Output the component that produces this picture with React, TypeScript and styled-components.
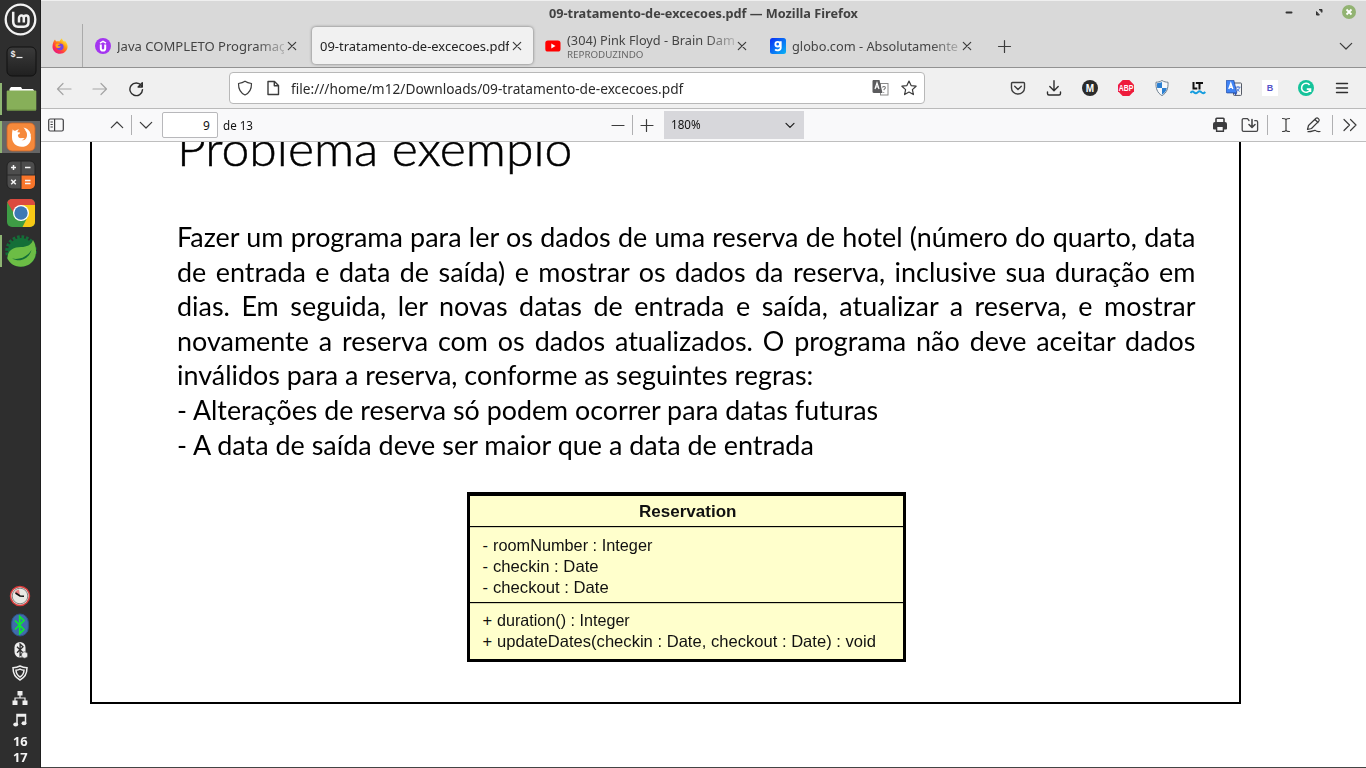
import React, { useLayoutEffect, useRef, useState } from 'react';
import styled, { createGlobalStyle, css } from 'styled-components';

const GlobalStyle = createGlobalStyle`
  * { box-sizing: border-box; }
  body { margin: 0; background: #fff; overflow: hidden; }
  svg { display: block; flex: none; }
`;

const uiFont = `"Noto Sans", "Open Sans", sans-serif`;

/* ---------- text fitted to a width ---------- */

const FitOuter = styled.span<{ $w: number }>`
  display: block;
  flex: none;
  width: ${(p) => p.$w}px;
  white-space: pre;
`;

const FitInner = styled.span`
  display: inline-block;
  transform-origin: 0 50%;
`;

function Fit({ w, children }: { w: number; children: React.ReactNode }) {
  const ref = useRef<HTMLSpanElement>(null);
  const [scale, setScale] = useState(1);
  useLayoutEffect(() => {
    if (ref.current) setScale(w / ref.current.offsetWidth);
  }, [w]);
  return (
    <FitOuter $w={w}>
      <FitInner ref={ref} style={{ transform: `scaleX(${scale})` }}>
        {children}
      </FitInner>
    </FitOuter>
  );
}

/* ---------- shell ---------- */

const Screen = styled.div`
  display: flex;
  width: 1366px;
  height: 768px;
  overflow: hidden;
  font-family: ${uiFont};
`;

const Dock = styled.aside`
  flex: none;
  display: flex;
  flex-direction: column;
  width: 41px;
  background: #2e2e2e;
  border-right: 1px solid #1f1f1f;
`;

const MintButton = styled.div`
  display: flex;
  justify-content: center;
  height: 42px;
  padding-top: 2.5px;
`;

const DockItem = styled.div<{ $running?: boolean; $active?: boolean }>`
  display: flex;
  align-items: center;
  justify-content: center;
  height: 32px;
  margin: 3px 0;
  border-left: 2px solid ${(p) => (p.$running ? '#8fb573' : 'transparent')};
  background: ${(p) => (p.$active ? '#666' : 'transparent')};
  background-clip: padding-box;
`;

const Tray = styled.div`
  display: flex;
  flex-direction: column;
  align-items: center;
  margin-top: auto;
  padding-bottom: 1px;
`;

const TrayItem = styled.div<{ $h: number }>`
  display: flex;
  align-items: center;
  height: ${(p) => p.$h}px;
`;

const Clock = styled.div`
  height: 38px;
  padding-top: 5px;
  font-size: 12px;
  font-weight: 700;
  line-height: 16px;
  color: #f4f4f4;
`;

const Browser = styled.main`
  flex: 1;
  display: flex;
  flex-direction: column;
  min-width: 0;
  border-bottom: 1px solid #444;
`;

/* ---------- title + tabs ---------- */

const TitleBar = styled.header`
  flex: none;
  display: flex;
  align-items: center;
  height: 24px;
  padding: 3px 10px 0 508px;
  border-top: 1px solid #efefef;
  background: #d9d9d9;
  color: #414141;
  font-size: 12.6px;
  font-weight: 700;
  line-height: 20px;
`;

const WindowButtons = styled.div`
  display: flex;
  align-items: center;
  gap: 16px;
  margin-left: auto;
  margin-top: -5px;
`;

const TabStrip = styled.div`
  flex: none;
  display: flex;
  height: 44px;
  border-bottom: 1px solid #929292;
  background: #d9d9d9;
  color: #444;
  font-size: 13px;
  line-height: 18px;
`;

const PinnedTab = styled.div`
  display: flex;
  align-items: center;
  justify-content: center;
  width: 42px;
  padding: 1px 4px 0 0;
  border-right: 1px solid #aaa;
`;

const Tab = styled.div<{ $w: number; $pl: number; $active?: boolean }>`
  flex: none;
  display: flex;
  align-items: center;
  width: ${(p) => p.$w}px;
  padding: 1px 0 0 ${(p) => p.$pl}px;
  ${(p) =>
    p.$active &&
    css`
      height: 37px;
      margin: 3px 0 0 1px;
      padding-top: 1px;
      border-radius: 4px;
      background: #f1f1f1;
      color: #222;
      box-shadow: 0 0 3px rgba(0, 0, 0, 0.5);
    `}
`;

const TabIcon = styled.div<{ $gap: number }>`
  margin-right: ${(p) => p.$gap}px;
`;

const TabLabel = styled.div<{ $w: number; $fade?: boolean }>`
  flex: none;
  width: ${(p) => p.$w}px;
  overflow: hidden;
  ${(p) =>
    p.$fade &&
    css`
      mask-image: linear-gradient(to right, #000 ${p.$w - 28}px, rgba(0, 0, 0, 0.25) ${p.$w}px);
    `}
`;

const TabSub = styled.div`
  color: #666;
  font-size: 9.5px;
  line-height: 12px;
`;

const StripButton = styled.div<{ $ml: string }>`
  display: flex;
  align-items: center;
  margin-left: ${(p) => p.$ml};
  padding-top: 1px;
`;

/* ---------- navigation ---------- */

const NavBar = styled.nav`
  flex: none;
  display: flex;
  align-items: center;
  height: 41px;
  padding: 0 16px 0 15px;
  border-bottom: 1px solid #bababa;
  background: #f0f0f0;
`;

const NavButtons = styled.div`
  display: flex;
  gap: 20px;
  width: 173px;
  padding-top: 1px;
`;

const UrlBar = styled.div`
  display: flex;
  align-items: center;
  width: 696px;
  height: 32px;
  padding: 0 7px;
  border: 1px solid #b8b8b8;
  border-radius: 4px;
  background: #fff;
  color: #2a2a2a;
  font-size: 14.2px;
  line-height: 20px;
`;

const UrlText = styled.div`
  padding-top: 1px;
`;

const UrlIcons = styled.div<{ $end?: boolean }>`
  display: flex;
  gap: 12px;
  margin-left: ${(p) => (p.$end ? 'auto' : '0')};
  margin-right: ${(p) => (p.$end ? 0 : 10)}px;
`;

const Extensions = styled.div`
  display: flex;
  gap: 20px;
  margin-left: auto;
`;

/* ---------- pdf toolbar ---------- */

const PdfBar = styled.div`
  flex: none;
  display: flex;
  align-items: center;
  height: 33px;
  border-bottom: 1px solid #bebebe;
  background: #f9f9fa;
  color: #111;
  font-size: 12px;
  line-height: 18px;
`;

const PdfLeft = styled.div`
  display: flex;
  align-items: center;
  width: 569px;
  padding-left: 7px;
`;

const PdfGroup = styled.div<{ $ml: number }>`
  display: flex;
  align-items: center;
  margin-left: ${(p) => p.$ml}px;
`;

const Divider = styled.i<{ $l?: number; $r?: number }>`
  width: 1px;
  height: 20px;
  margin: 0 ${(p) => p.$r ?? 6}px 0 ${(p) => p.$l ?? 6}px;
  background: #b0b0b2;
`;

const PageInput = styled.div`
  display: flex;
  align-items: center;
  justify-content: flex-end;
  width: 56px;
  height: 26px;
  margin: 0 5px 0 8px;
  padding: 1px 7px 0 0;
  border: 1px solid #b8b8bb;
  border-radius: 2px;
  background: #fff;
`;

const PageTotal = styled.div`
  padding-top: 2px;
`;

const ZoomSelect = styled.div`
  display: flex;
  align-items: center;
  justify-content: space-between;
  width: 140px;
  height: 28px;
  margin-left: 9px;
  padding: 0 6px 1px 7px;
  background: #d7d7db;
`;

/* ---------- document ---------- */

const Viewer = styled.section`
  flex: 1;
  min-height: 0;
  overflow: hidden;
  padding-left: 48.5px;
  background: #fff;
`;

const Slide = styled.article`
  width: 1151.5px;
  height: 561.5px;
  padding-left: 85px;
  overflow: hidden;
  border: solid #000;
  border-width: 0 2.4px 2.4px;
  color: #000;
  font-family: Lato, "Open Sans", sans-serif;
`;

const SlideTitle = styled.h1`
  margin: -16px 0 0;
  height: 44px;
  font-size: 48px;
  font-weight: 300;
  line-height: 44px;
  -webkit-text-stroke: 0.5px #000;
`;

const Body = styled.div`
  margin-top: 50px;
  width: 1018px;
  font-size: 26.4px;
  line-height: 34.6px;
`;

const BODY_SCALE = 1.02;

const Justified = styled.div`
  width: ${1018.5 / BODY_SCALE}px;
  white-space: nowrap;
  text-align: justify;
  text-align-last: justify;
  transform: scaleX(${BODY_SCALE});
  transform-origin: 0 50%;
`;

const Uml = styled.div`
  width: 439px;
  height: 170px;
  margin: 29.5px 0 0 290px;
  border: 3px solid #000;
  border-top-width: 4px;
  background: #ffffcc;
  color: #111;
  font-family: "Liberation Sans", Arial, sans-serif;
  font-size: 16.5px;
  line-height: 21.3px;
`;

const UmlHead = styled.div`
  display: flex;
  justify-content: center;
  height: 31px;
  padding: 5px 0 0 2px;
  border-bottom: 1px solid #000;
  box-shadow: 0 1px 0 #d5d5ac;
  font-weight: 700;
`;

const UmlSection = styled.div<{ $h: number; $line?: boolean }>`
  height: ${(p) => p.$h}px;
  padding: ${(p) => (p.$line ? 8 : 7.3)}px 0 0 13px;
  ${(p) =>
    p.$line &&
    css`
      border-bottom: 1px solid #000;
      box-shadow: 0 1px 0 #d5d5ac;
    `}
`;

const UmlRow = styled.div<{ $mark: number }>`
  display: grid;
  grid-template-columns: ${(p) => p.$mark}px auto;
`;

/* ---------- icons ---------- */

type IconProps = { d: string; s?: number; c?: string; sw?: number; fill?: string; vb?: number };

const Icon = ({ d, s = 16, c = '#3c3c3c', sw = 1.2, fill = 'none', vb = 16 }: IconProps) => (
  <svg width={s} height={s} viewBox={`0 0 ${vb} ${vb}`} fill={fill} stroke={c} strokeWidth={sw} strokeLinecap="round" strokeLinejoin="round">
    <path d={d} />
  </svg>
);

const CLOSE = 'M4.300 4.300l7.400 7.400M11.700 4.300l-7.400 7.400';
const CHEV_DOWN = 'M2.300 5.300L8 11l5.700-5.700';

const FirefoxColor = () => (
  <svg width="16" height="16" viewBox="0 0 16 16">
    <defs>
      <linearGradient id="ffc" x1="0.9" y1="0.1" x2="0.2" y2="1">
        <stop offset="0" stopColor="#fff44f" />
        <stop offset="0.35" stopColor="#ff980e" />
        <stop offset="0.7" stopColor="#ff3647" />
        <stop offset="1" stopColor="#e31587" />
      </linearGradient>
    </defs>
    <path d="M3 1.600c.3 1 .8 1.600 1.600 2C6 3 7 3.300 7.600 3.500 8 2 9 1 10 .2c.2 1.800 1.200 2.500 2.300 3.600l.5-1.300C14.600 4.500 15.600 6.500 15.600 8.600c0 4-3.300 7.200-7.500 7.200S.5 12.700.5 8.700C.5 6 1.600 3 3 1.600z" fill="url(#ffc)" />
    <circle cx="8.200" cy="8.800" r="3.400" fill="#7542e5" />
    <path d="M3.600 6.400c1.500-1.300 3.400-1 4.500.2-1 .2-2 .6-2.200 1.400 1 .3 2.300 0 3 .6-.6 1.200-1.800 1.500-3.300 1.500C4 9.600 3.200 8 3.600 6.400z" fill="#ffa516" />
  </svg>
);

const Udemy = () => (
  <svg width="16" height="16" viewBox="0 0 16 16">
    <circle cx="8" cy="8" r="8" fill="#a435f0" />
    <path d="M5 5.100L8 3.300l3 1.800" fill="none" stroke="#fff" strokeWidth="1.500" />
    <path d="M5.800 6.600v3.600c0 3.200 4.400 3.200 4.400 0V6.600" fill="none" stroke="#fff" strokeWidth="2" />
  </svg>
);

const YouTube = () => (
  <svg width="16" height="12" viewBox="0 0 16 12">
    <rect x="0.300" y="0.500" width="15.200" height="11" rx="2.600" fill="#f00" />
    <path d="M6.300 3.500v5l4.200-2.500z" fill="#fff" />
  </svg>
);

const Globo = () => (
  <svg width="16" height="16" viewBox="0 0 16 16">
    <defs>
      <linearGradient id="glb" x1="0" y1="0" x2="1" y2="1">
        <stop offset="0" stopColor="#0a2cf5" />
        <stop offset="1" stopColor="#08b4f5" />
      </linearGradient>
    </defs>
    <rect width="16" height="16" rx="2.500" fill="url(#glb)" />
    <circle cx="7.700" cy="6.200" r="2.300" fill="none" stroke="#fff" strokeWidth="1.900" />
    <path d="M10.700 3.200v6.600c0 3-4.400 3.100-5.500 1.600" fill="none" stroke="#fff" strokeWidth="1.900" />
  </svg>
);

const TranslateGray = () => (
  <svg width="17" height="16" viewBox="0 0 17 16">
    <rect x="8.500" y="3.500" width="7.500" height="11.500" fill="#fff" stroke="#8a8a8a" />
    <path d="M10.500 7.500c.5-1.400 3-1.200 2.800.4-.2 1-1.300 1-1.500 2.200M11.700 12v.8" fill="none" stroke="#777" strokeWidth="1.100" />
    <path d="M1 0h6.500l3 13H2a1.500 1.500 0 0 1-1.500-1.500V1z" fill="#5b5b5d" />
    <path d="M3 9l2-6 2 6M3.800 7h2.500" fill="none" stroke="#fff" strokeWidth="1.200" />
  </svg>
);

const TranslateBlue = () => (
  <svg width="16" height="16" viewBox="0 0 16 16">
    <rect x="7.500" y="3" width="8" height="12.400" rx="0.800" fill="#f5f5f5" stroke="#555a66" />
    <path d="M9.500 7.200h5M12 6v1M13.500 7.500c-.5 2-1.500 3-2.500 3.800M10.500 8.500c.6 1.300 1.800 2.300 3 2.900" fill="none" stroke="#4b79d8" strokeWidth="1" />
    <path d="M1.200.2h6.600l3 12.700H1.200a1 1 0 0 1-1-1V1.200a1 1 0 0 1 1-1z" fill="#3f83f5" stroke="#264a9b" strokeWidth="0.800" />
    <path d="M8 13h3l-1.400 2.700z" fill="#2a4fb0" />
    <path d="M2.800 9l2-5.600 2 5.600M3.500 7.300h2.600" fill="none" stroke="#fff" strokeWidth="1.400" />
  </svg>
);

const BadgeText = styled.text`
  font-family: "Liberation Sans", Arial, sans-serif;
  font-weight: 700;
  line-height: 1;
  text-anchor: middle;
`;

const Badge = ({ label, bg, fg = '#fff', size = 9, shape }: { label: string; bg: string; fg?: string; size?: number; shape: 'circle' | 'oct' | 'square' }) => (
  <svg width="16" height="16" viewBox="0 0 16 16">
    {shape === 'circle' && <circle cx="8" cy="8" r="8" fill={bg} />}
    {shape === 'oct' && <path d="M4.700 0h6.600L16 4.700v6.600L11.300 16H4.700L0 11.300V4.700z" fill={bg} />}
    {shape === 'square' && <rect width="16" height="16" fill={bg} />}
    <BadgeText x="8" y={8 + size * 0.36} fontSize={size} fill={fg} textLength={label.length > 1 ? 14.5 : undefined} lengthAdjust="spacingAndGlyphs">
      {label}
    </BadgeText>
  </svg>
);

const BlueShield = () => (
  <svg width="16" height="16" viewBox="0 0 16 16">
    <path d="M8 .5c2 1.300 4 1.700 6 1.700C14.300 8 13 12.800 8 15.600 3 12.800 1.700 8 2 2.200c2 0 4-.4 6-1.700z" fill="#f5f8fb" stroke="#6f8090" />
    <path d="M8 2v6H3.200C2.900 6.300 2.900 4.700 3 3.200 5 3.100 6.500 2.700 8 2zM8 8h4.800c-.5 2.700-1.900 5-4.800 6.500z" fill="#2c7fd0" />
  </svg>
);

const LanguageTool = () => (
  <svg width="16" height="16" viewBox="0 0 16 16">
    <path d="M3.500 2v6.500h3.800M5.800 2.900h7.200M9.500 2.900v6.500" fill="none" stroke="#111" strokeWidth="2" />
    <path d="M.5 13c1.200-2 2.500-2 3.700-.5 1.200 1.200 2.400 1 3.700-.4 1.200-1.200 2.500-1 3.600.3 1.200 1.200 2.500 1 3.800-.4" fill="none" stroke="#169dde" strokeWidth="2" />
  </svg>
);

const Grammarly = () => (
  <svg width="16" height="16" viewBox="0 0 16 16">
    <circle cx="8" cy="8" r="8" fill="#15c39a" />
    <path d="M11.600 5A4.500 4.500 0 1 0 12.300 9.300M8.800 9.100h3.700v3" fill="none" stroke="#fff" strokeWidth="1.600" />
  </svg>
);

const Printer = () => (
  <svg width="16" height="16" viewBox="0 0 16 16">
    <path d="M4 5V2a.8.8 0 0 1 .8-.8h6.400A.8.8 0 0 1 12 2v3" fill="none" stroke="#3c3c3e" strokeWidth="1.600" />
    <path d="M3 5h10a2 2 0 0 1 2 2v4.500a1 1 0 0 1-1 1h-2V10H4v2.500H2a1 1 0 0 1-1-1V7a2 2 0 0 1 2-2z" fill="#3c3c3e" />
    <path d="M4.600 10v4.300h6.800V10" fill="none" stroke="#3c3c3e" strokeWidth="1.400" />
  </svg>
);

const SaveIcon = () => (
  <svg width="18" height="16" viewBox="0 0 18 16" fill="none" stroke="#48484a" strokeWidth="1.300" strokeLinecap="round" strokeLinejoin="round">
    <path d="M8 3.500L6.500 1.700H2.500A1.300 1.300 0 0 0 1.200 3v10a1.300 1.300 0 0 0 1.300 1.300h12.800a1.300 1.300 0 0 0 1.300-1.300V5a1.300 1.300 0 0 0-1.300-1.300h-1.500" />
    <path d="M11 2.500v7.500M8 7.500l3 3 3-3" strokeWidth="1.600" />
  </svg>
);

const Sidebar = () => (
  <svg width="16" height="14" viewBox="0 0 16 14" fill="none" stroke="#3e3e40" strokeWidth="1.200">
    <rect x="0.700" y="1" width="14.600" height="12" rx="1.500" />
    <path d="M6.600 1v12M2.500 4h2.300M2.500 6.500h2.300M2.500 9h2.300" />
  </svg>
);

const MintLogo = () => (
  <svg width="33" height="33" viewBox="0 0 33 33" fill="none" stroke="#f2f2f2">
    <circle cx="16.500" cy="16.500" r="14.800" strokeWidth="2.300" />
    <path d="M9.200 8.800v10c0 3.300 1.700 4.900 4.800 4.900h5.800c3 0 4.700-1.600 4.700-4.600v-3.800c0-3.600-4.700-3.600-4.700 0v4.100M19.800 15.300c0-3.600-4.800-3.600-4.800 0v4.100" strokeWidth="2.500" />
  </svg>
);

const Mono = styled.text`
  font-family: "Liberation Mono", monospace;
  font-weight: 700;
`;

const Terminal = () => (
  <svg width="31" height="31" viewBox="0 0 31 31">
    <defs>
      <linearGradient id="trm" x1="0" y1="0" x2="0" y2="1">
        <stop offset="0" stopColor="#3b3b3b" />
        <stop offset="1" stopColor="#202020" />
      </linearGradient>
    </defs>
    <rect x="1" y="1" width="29" height="29" rx="5" fill="url(#trm)" stroke="#111" />
    <Mono x="4.500" y="11" fontSize="8.500" fill="#eee">$</Mono>
    <path d="M10.500 11.500h6" stroke="#eee" strokeWidth="1.200" />
  </svg>
);

const Folder = () => (
  <svg width="31" height="28" viewBox="0 0 31 28">
    <path d="M3.500 6V4l1.500-2h10l1.200 2H27l1.200 2v2h-25z" fill="#fff" />
    <rect x="0.700" y="5.500" width="29.600" height="20" rx="1" fill="#87af59" />
    <path d="M1 25h29" stroke="#6b8f43" />
  </svg>
);

const FirefoxTile = () => (
  <svg width="30" height="30" viewBox="0 0 30 30">
    <rect x="1" y="1" width="28" height="28" rx="5" fill="#f6893b" stroke="#c9642a" strokeWidth="0.800" />
    <path d="M6.800 7.200c.5 1.200 1.300 1.500 2.600 1.500 1.200-.8 2.400-1.200 3.900-1.100-1.500.8-1.900 1.800-1.700 2.600l2.500.4c0 1.300-1.200 1.600-2.200 2.300-.1 2.300 1.800 3.600 4 3.200 1.600-.3 2.200 0 2.800.5-.8.9-1.900 1.500-3.200 1.700 3.300.4 5.600-2 5.500-5.500 0-2-.8-3.900-2.300-5.300 3.800 1 6.300 4.500 6.300 8.400 0 5-4 8.900-9.300 8.900-5.400 0-9.700-4-9.700-9.300 0-3 0-6.300.8-8.300z" fill="#fff" />
    <path d="M17.500 5.500c4 .8 6.800 3.600 7.500 8.500l-3.500-3.500z" fill="#fff" />
  </svg>
);

const Calculator = () => (
  <svg width="30" height="30" viewBox="0 0 30 30">
    <rect x="1" y="1" width="28" height="28" rx="5" fill="#4d4d4d" stroke="#222" />
    <path d="M15 15h14v9a5 5 0 0 1-5 5h-9z" fill="#f8752a" />
    <path d="M15 1v28M1 15h28" stroke="#2a2a2a" />
    <path d="M5 7.500h5M7.500 5v5M19 7.500h5.500M5.200 19.700l4.600 4.600M9.800 19.700l-4.600 4.600M19 20.500h5.500M19 23.500h5.500" stroke="#f5f5f5" strokeWidth="1.500" />
  </svg>
);

const Chrome = () => (
  <svg width="30" height="30" viewBox="0 0 30 30">
    <clipPath id="chc"><rect x="1" y="1" width="28" height="28" rx="5" /></clipPath>
    <g clipPath="url(#chc)">
      <rect width="30" height="30" fill="#3e9c45" />
      <path d="M15 7h15v23H16l6-12z" fill="#f8c916" />
      <path d="M0 0h30v7H15l-6 10L1 4z" fill="#dc4a3f" />
    </g>
    <circle cx="15" cy="15" r="8" fill="#fff" />
    <circle cx="15" cy="15" r="6.700" fill="#3d78b5" />
  </svg>
);

const Spring = () => (
  <svg width="32" height="32" viewBox="0 0 32 32">
    <circle cx="16" cy="16" r="13.800" fill="none" stroke="#146e38" strokeWidth="4" strokeDasharray="2.600 1.740" />
    <circle cx="16" cy="16" r="13" fill="#146e38" />
    <path d="M28 5c3 5 4 12 2 17-2 6-8 9.800-14 9.800-6 0-11-3-13.500-8C2 16 8 12 16 12c6 0 10-2 12-7z" fill="#6cbd45" />
    <path d="M7 23.500c8 1.500 15-1.500 19.500-8.500-2.500 8.500-11 13-19.500 8.500z" fill="#146e38" />
  </svg>
);

const TrayClock = () => (
  <svg width="22" height="22" viewBox="0 0 22 22">
    <circle cx="11" cy="11" r="9.500" fill="#e9e9e4" stroke="#d83a3a" strokeWidth="1.500" />
    <circle cx="11" cy="11" r="7.800" fill="none" stroke="#777" strokeWidth="0.900" />
    <path d="M11 11L5.500 7.500A6.500 6.500 0 0 1 10 4.600z" fill="#e88080" />
    <path d="M6.500 8l4.500 3 4 .3" fill="none" stroke="#111" strokeWidth="1.600" />
  </svg>
);

const Bluetooth = () => (
  <svg width="18" height="24" viewBox="0 0 18 24">
    <rect x="0.700" y="1" width="16.600" height="22" rx="8.300" fill="#3f6cab" stroke="#2f5288" />
    <path d="M4 7.500l9 9-4.300 4V3.500l4.300 4-9 9" fill="none" stroke="#0fe830" strokeWidth="1.700" />
  </svg>
);

const BluetoothOff = () => (
  <svg width="16" height="18" viewBox="0 0 16 18">
    <rect x="2.500" y="1" width="11" height="15.500" rx="5.500" fill="#eee" />
    <path d="M5 5.800l6 6-2.900 2.700V3l2.900 2.800-6 6" fill="none" stroke="#2d2d2d" strokeWidth="1.300" />
    <circle cx="12.600" cy="14" r="3.200" fill="#eee" stroke="#2d2d2d" strokeWidth="0.600" />
  </svg>
);

const TrayShield = () => (
  <svg width="16" height="16" viewBox="0 0 16 16" fill="none" stroke="#eee">
    <path d="M8 1c2.300 1.200 4.600 1.700 7 1.800 0 5.500-2 9.700-7 12.200C3 12.500 1 8.300 1 2.800 3.400 2.700 5.700 2.200 8 1z" strokeWidth="1.500" />
    <path d="M8 4.200c1.300.7 2.700 1 4 1.100-.2 3-1.500 5.300-4 6.700-2.500-1.400-3.800-3.700-4-6.700 1.300-.1 2.700-.4 4-1.100z" strokeWidth="1.500" />
  </svg>
);

const Network = () => (
  <svg width="16" height="16" viewBox="0 0 16 16">
    <path d="M5.500 1h5v4.500h-5zM.5 10.500h5v4.500h-5zM10.500 10.500h5v4.500h-5z" fill="#eee" />
    <path d="M8 5v3M3 11V8h10v3" fill="none" stroke="#eee" strokeWidth="1.200" />
  </svg>
);

const Music = () => (
  <svg width="16" height="16" viewBox="0 0 16 16">
    <path d="M5 12.500V2.500h8.500v8.500M5 4h8.500" fill="none" stroke="#eee" strokeWidth="1.500" />
    <ellipse cx="3.700" cy="12.600" rx="2.500" ry="2" fill="#eee" />
    <ellipse cx="12" cy="11.300" rx="2.500" ry="2" fill="#eee" />
  </svg>
);

/* ---------- data ---------- */

const justifiedLines = [
  'Fazer um programa para ler os dados de uma reserva de hotel (número do quarto, data',
  'de entrada e data de saída) e mostrar os dados da reserva, inclusive sua duração em',
  'dias. Em seguida, ler novas datas de entrada e saída, atualizar a reserva, e mostrar',
  'novamente a reserva com os dados atualizados. O programa não deve aceitar dados',
];

const looseLines: [string, number][] = [
  ['inválidos para a reserva, conforme as seguintes regras:', 636],
  ['- Alterações de reserva só podem ocorrer para datas futuras', 701],
  ['- A data de saída deve ser maior que a data de entrada', 637],
];

const attributes: [string, number][] = [
  ['roomNumber : Integer', 159],
  ['checkin : Date', 106],
  ['checkout : Date', 116],
];

const operations: [string, number][] = [
  ['duration() : Integer', 133],
  ['updateDates(checkin : Date, checkout : Date) : void', 379],
];

export default function App() {
  return (
    <Screen>
      <GlobalStyle />
      <Dock>
        <MintButton><MintLogo /></MintButton>
        <DockItem><Terminal /></DockItem>
        <DockItem $running><Folder /></DockItem>
        <DockItem $running $active><FirefoxTile /></DockItem>
        <DockItem><Calculator /></DockItem>
        <DockItem><Chrome /></DockItem>
        <DockItem $running><Spring /></DockItem>
        <Tray>
          <TrayItem $h={28}><TrayClock /></TrayItem>
          <TrayItem $h={30}><Bluetooth /></TrayItem>
          <TrayItem $h={20}><BluetoothOff /></TrayItem>
          <TrayItem $h={26}><TrayShield /></TrayItem>
          <TrayItem $h={24}><Network /></TrayItem>
          <TrayItem $h={19}><Music /></TrayItem>
          <Clock>
            <Fit w={15}>16</Fit>
            <Fit w={15}>17</Fit>
          </Clock>
        </Tray>
      </Dock>

      <Browser>
        <TitleBar>
          <Fit w={309}>09-tratamento-de-excecoes.pdf — Mozilla Firefox</Fit>
          <WindowButtons>
            <Icon s={14} vb={14} d="M4.500 7.500h5" sw={2} c="#333" />
            <Icon s={14} vb={14} d="M7.500 4.500H10v2.500zM4.500 7v3H7z" sw={1} c="#333" fill="#333" />
            <svg width="14" height="14" viewBox="0 0 14 14">
              <circle cx="7" cy="7" r="7" fill="#92b372" />
              <path d="M4.500 4.500l5 5M9.500 4.500l-5 5" stroke="#fff" strokeWidth="1.800" />
            </svg>
          </WindowButtons>
        </TitleBar>

        <TabStrip>
          <PinnedTab><FirefoxColor /></PinnedTab>
          <Tab $w={228} $pl={12}>
            <TabIcon $gap={6}><Udemy /></TabIcon>
            <TabLabel $w={167} $fade><Fit w={168}>Java COMPLETO Programaç</Fit></TabLabel>
            <Icon d={CLOSE} />
          </Tab>
          <Tab $w={221} $pl={8} $active>
            <TabLabel $w={189}><Fit w={190}>09-tratamento-de-excecoes.pdf</Fit></TabLabel>
            <Icon d={CLOSE} />
          </Tab>
          <Tab $w={225} $pl={12}>
            <TabIcon $gap={6}><YouTube /></TabIcon>
            <TabLabel $w={167} $fade>
              <Fit w={168}>(304) Pink Floyd - Brain Dam</Fit>
              <TabSub><Fit w={76}>REPRODUZINDO</Fit></TabSub>
            </TabLabel>
            <Icon d={CLOSE} />
          </Tab>
          <Tab $w={225} $pl={12}>
            <TabIcon $gap={6}><Globo /></TabIcon>
            <TabLabel $w={167} $fade><Fit w={166}>globo.com - Absolutamente</Fit></TabLabel>
            <Icon d={CLOSE} />
          </Tab>
          <StripButton $ml="13px"><Icon d="M2.500 8.500h12M8.500 2.500v12" /></StripButton>
          <StripButton $ml="326px"><Icon d={CHEV_DOWN} /></StripButton>
        </TabStrip>

        <NavBar>
          <NavButtons>
            <Icon d="M15 8H1.500M7 2.500L1.500 8 7 13.500" c="#a5a5a5" />
            <Icon d="M1 8h13.500M9 2.500L14.500 8 9 13.500" c="#a5a5a5" />
            <Icon d="M13.300 4.600A6.300 6.300 0 1 0 14.500 8.600M14.300 1.800v4.200h-4.200z" c="#2e2e2e" sw={1.4} />
          </NavButtons>
          <UrlBar>
            <UrlIcons>
              <Icon d="M8 1.200c2 1.300 4.300 1.900 6.500 2.300C14.600 8.500 13 12.700 8 15 3 12.700 1.400 8.500 1.500 3.500 3.700 3.100 6 2.500 8 1.200z" />
              <Icon d="M3 1.500h6.500l4 4v9H3zM9.300 1.700v4h4" sw={1.4} />
            </UrlIcons>
            <UrlText><Fit w={392}>file:///home/m12/Downloads/09-tratamento-de-excecoes.pdf</Fit></UrlText>
            <UrlIcons $end>
              <TranslateGray />
              <Icon d="M8 1l2.100 4.600 5 .6-3.700 3.400 1 5L8 12.100l-4.400 2.500 1-5L.9 6.200l5-.6z" />
            </UrlIcons>
          </UrlBar>
          <Extensions>
            <Icon d="M2.500 2.500h11a1 1 0 0 1 1 1V8a6.500 6 0 0 1-13 0V3.500a1 1 0 0 1 1-1zM4.700 6.300L8 9.500l3.300-3.200" sw={1.4} />
            <Icon d="M8 .8v9.700M3.800 6.500L8 10.700l4.200-4.200M1.500 12v1.500a1.500 1.500 0 0 0 1.500 1.500h10a1.500 1.500 0 0 0 1.500-1.500V12" sw={1.4} c="#2e2e2e" />
            <Badge label="M" bg="#2b2b2b" size={10} shape="circle" />
            <Badge label="ABP" bg="#ee1c3c" size={9} shape="oct" />
            <BlueShield />
            <LanguageTool />
            <TranslateBlue />
            <Badge label="B" bg="#fff" fg="#5552c9" size={9} shape="square" />
            <Grammarly />
            <Icon d="M2.500 3.500h11M2.500 8h11M2.500 12.500h11" sw={1.4} c="#2e2e2e" />
          </Extensions>
        </NavBar>

        <PdfBar>
          <PdfLeft>
            <Sidebar />
            <PdfGroup $ml={45}>
              <Icon d="M2.300 10.700L8 5l5.700 5.700" />
              <Divider />
              <Icon d={CHEV_DOWN} />
              <PageInput><Fit w={7}>9</Fit></PageInput>
              <PageTotal><Fit w={30}>de 13</Fit></PageTotal>
            </PdfGroup>
          </PdfLeft>
          <Icon d="M2 8.500h12" />
          <Divider $l={6} $r={6} />
          <Icon d="M2 8.500h12M7.500 2.500v12" />
          <ZoomSelect>
            <Fit w={30}>180%</Fit>
            <Icon d="M4 6.300l4 4 4-4" c="#1c1c1c" />
          </ZoomSelect>
          <PdfGroup $ml={408}>
            <Printer />
            <PdfGroup $ml={13}><SaveIcon /></PdfGroup>
            <Divider $l={8} $r={10} />
            <Icon d="M4.500 1.500c2 0 3.500.3 3.500 1.500v10c0 1.200-1.500 1.500-3.500 1.500M11.500 1.500C9.500 1.500 8 1.800 8 3M8 13c0 1.200 1.500 1.500 3.500 1.500" />
            <PdfGroup $ml={12}>
              <Icon d="M1.500 12.500l1-4L10 1.300c1.500-1 4 1 2.800 2.800L5.500 11.500l-4 1zM9 2.500l3 3M2 14.700c4 .3 6-1.800 7.500-1.200.6.800 2 1.200 4.500 1" />
            </PdfGroup>
            <Divider $l={10} $r={9} />
            <Icon d="M2 2.500L7.500 8 2 13.500M8.500 2.500L14 8l-5.500 5.500" />
          </PdfGroup>
        </PdfBar>

        <Viewer>
          <Slide>
            <SlideTitle><Fit w={395}>Problema exemplo</Fit></SlideTitle>
            <Body>
              {justifiedLines.map((t) => <Justified key={t}>{t}</Justified>)}
              {looseLines.map(([t, w]) => <Fit key={t} w={w}>{t}</Fit>)}
            </Body>
            <Uml>
              <UmlHead><Fit w={97}>Reservation</Fit></UmlHead>
              <UmlSection $h={76} $line>
                {attributes.map(([t, w]) => (
                  <UmlRow key={t} $mark={10}><span>-</span><Fit w={w}>{t}</Fit></UmlRow>
                ))}
              </UmlSection>
              <UmlSection $h={56}>
                {operations.map(([t, w]) => (
                  <UmlRow key={t} $mark={14}><span>+</span><Fit w={w}>{t}</Fit></UmlRow>
                ))}
              </UmlSection>
            </Uml>
          </Slide>
        </Viewer>
      </Browser>
    </Screen>
  );
}
